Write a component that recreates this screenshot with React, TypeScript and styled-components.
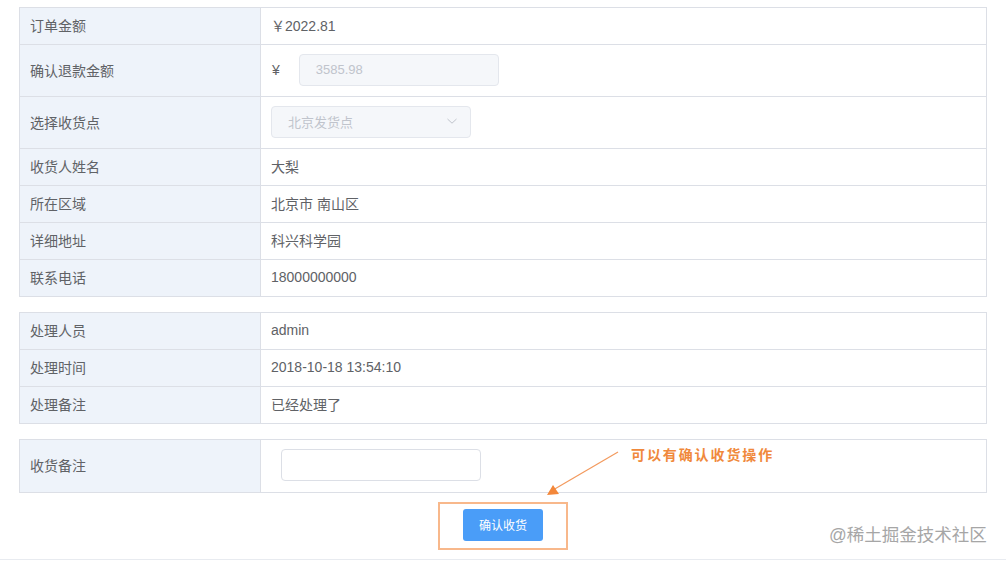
import React from 'react';
import styled, { createGlobalStyle } from 'styled-components';

const GlobalStyle = createGlobalStyle`
  html, body {
    margin: 0;
    padding: 0;
    background: #ffffff;
    font-family: "Liberation Sans", "Noto Sans CJK SC", sans-serif;
  }
`;

const Page = styled.div`
  position: relative;
  width: 1006px;
  padding: 7px 19px 9px 19px;
  box-sizing: border-box;
  border-bottom: 1px solid #e8ebf0;
`;

const InfoTable = styled.div<{ $gap?: number }>`
  display: grid;
  grid-template-columns: 241px 1fr;
  border: 1px solid #dcdfe6;
  border-bottom: none;
  margin-top: ${p => p.$gap ?? 0}px;
`;

const Label = styled.div<{ $h: number }>`
  height: ${p => p.$h}px;
  box-sizing: border-box;
  display: flex;
  align-items: center;
  padding: 0 0 2px 10px;
  background: #eef3fa;
  border-right: 1px solid #dcdfe6;
  border-bottom: 1px solid #dcdfe6;
  font-size: 14px;
  color: #606266;
`;

const Value = styled.div<{ $h: number; $pad?: number }>`
  height: ${p => p.$h}px;
  box-sizing: border-box;
  display: flex;
  align-items: center;
  padding: 0 0 2px ${p => p.$pad ?? 10}px;
  border-bottom: 1px solid #dcdfe6;
  font-size: 14px;
  color: #606266;
`;

const Yen = styled.span`
  margin-right: 19px;
  margin-left: 1px;
`;

const DisabledInput = styled.div`
  width: 200px;
  height: 32px;
  box-sizing: border-box;
  display: flex;
  align-items: center;
  justify-content: space-between;
  padding: 0 12px 1px 16px;
  background: #f5f7fa;
  border: 1px solid #e4e7ed;
  border-radius: 4px;
  font-size: 13px;
  color: #c0c4cc;
`;

const TextInput = styled.div`
  width: 200px;
  height: 32px;
  box-sizing: border-box;
  background: #ffffff;
  border: 1px solid #dcdfe6;
  border-radius: 4px;
`;

const ActionRow = styled.div`
  display: flex;
  justify-content: center;
  margin-top: 9px;
`;

const Highlight = styled.div`
  border: 2px solid #f8b88b;
  padding: 5px 23px 7px;
`;

const PrimaryButton = styled.button`
  display: block;
  width: 80px;
  height: 32px;
  border: none;
  border-radius: 3px;
  background: #4a9df8;
  color: #ffffff;
  font-family: "Liberation Sans", "Noto Sans CJK SC", sans-serif;
  font-size: 12px;
  padding: 0 0 1px;
  cursor: pointer;
`;

const Note = styled.div`
  position: absolute;
  left: 631px;
  top: 444px;
  font-size: 14px;
  font-weight: 700;
  letter-spacing: 1.9px;
  color: #f0893c;
`;

const Watermark = styled.div`
  position: absolute;
  left: 829px;
  top: 521px;
  font-size: 17.5px;
  color: #a6a6a6;
`;

const Overlay = styled.svg`
  position: absolute;
  left: 0;
  top: 0;
  pointer-events: none;
`;

const Chevron = () => (
  <svg width="12" height="12" viewBox="0 0 12 12">
    <path d="M1.5 4 L6 8.2 L10.5 4" fill="none" stroke="#c0c4cc" strokeWidth="1" />
  </svg>
);

const infoRows: [string, string][] = [
  ['收货人姓名', '大梨'],
  ['所在区域', '北京市 南山区'],
  ['详细地址', '科兴科学园'],
  ['联系电话', '18000000000'],
];

const handleRows: [string, string][] = [
  ['处理人员', 'admin'],
  ['处理时间', '2018-10-18 13:54:10'],
  ['处理备注', '已经处理了'],
];

export default function App() {
  return (
    <>
      <GlobalStyle />
      <Page>
        <InfoTable>
          <Label $h={37}>订单金额</Label>
          <Value $h={37}>￥2022.81</Value>
          <Label $h={52}>确认退款金额</Label>
          <Value $h={52}>
            <Yen>¥</Yen>
            <DisabledInput>3585.98</DisabledInput>
          </Value>
          <Label $h={52}>选择收货点</Label>
          <Value $h={52}>
            <DisabledInput>
              北京发货点
              <Chevron />
            </DisabledInput>
          </Value>
          {infoRows.map(([k, v]) => (
            <React.Fragment key={k}>
              <Label $h={37}>{k}</Label>
              <Value $h={37}>{v}</Value>
            </React.Fragment>
          ))}
        </InfoTable>

        <InfoTable $gap={15}>
          {handleRows.map(([k, v]) => (
            <React.Fragment key={k}>
              <Label $h={37}>{k}</Label>
              <Value $h={37}>{v}</Value>
            </React.Fragment>
          ))}
        </InfoTable>

        <InfoTable $gap={15}>
          <Label $h={53}>收货备注</Label>
          <Value $h={53} $pad={20}>
            <TextInput />
          </Value>
        </InfoTable>

        <ActionRow>
          <Highlight>
            <PrimaryButton>确认收货</PrimaryButton>
          </Highlight>
        </ActionRow>

        <Overlay width="1006" height="561">
          <line x1="618" y1="452" x2="553" y2="490" stroke="#f39a5e" strokeWidth="1.2" />
          <polygon points="547,495 559,494 553,485" fill="#f3873a" />
        </Overlay>
        <Note>可以有确认收货操作</Note>
        <Watermark>@稀土掘金技术社区</Watermark>
      </Page>
    </>
  );
}
